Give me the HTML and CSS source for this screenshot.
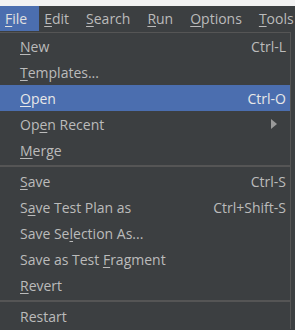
FILE: index.html
```html
<!DOCTYPE html>
<html lang="en">
<head>
    <meta charset="UTF-8">
    <meta name="viewport" content="width=device-width, initial-scale=1.0">
    <title>File Menu</title>
    <link rel="stylesheet" href="styles.css">
</head>
<body>
    <div class="title-strip"></div>

    <div class="menubar">
        <span class="menu-title active"><u>F</u>ile</span>
        <span class="menu-title"><u>E</u>dit</span>
        <span class="menu-title"><u>S</u>earch</span>
        <span class="menu-title"><u>R</u>un</span>
        <span class="menu-title"><u>O</u>ptions</span>
        <span class="menu-title"><u>T</u>ools</span>
    </div>

    <div class="popup">
        <div class="item"><span><u>N</u>ew</span><span class="shortcut">Ctrl-L</span></div>
        <div class="item"><span><u>T</u>emplates...</span></div>
        <div class="item selected"><span><u>O</u>pen</span><span class="shortcut">Ctrl-O</span></div>
        <div class="item"><span>Op<u>e</u>n Recent</span>
            <svg class="arrow" width="6" height="10" viewBox="0 0 6 10"><polygon points="0,0 6,5 0,10" fill="#9a9a9a"/></svg>
        </div>
        <div class="item"><span><u>M</u>erge</span></div>
        <div class="separator"></div>
        <div class="item"><span><u>S</u>ave</span><span class="shortcut">Ctrl-S</span></div>
        <div class="item"><span>S<u>a</u>ve Test Plan as</span><span class="shortcut">Ctrl+Shift-S</span></div>
        <div class="item"><span>Save Se<u>l</u>ection As...</span></div>
        <div class="item"><span>Save as Test <u>F</u>ragment</span></div>
        <div class="item"><span><u>R</u>evert</span></div>
        <div class="separator"></div>
        <div class="item"><span>Restart</span></div>
    </div>
</body>
</html>
```

FILE: styles.css
```css
body {
    margin: 0;
    background-color: #3c3f41;
    font-family: "Open Sans", "Noto Sans", sans-serif;
    font-size: 14px;
    color: #bbbbbb;
    overflow: hidden;
}

u {
    text-decoration-thickness: 1px;
    text-underline-offset: 2px;
}

.title-strip {
    height: 6px;
    background-color: #f2f2f2;
}

.menubar {
    display: flex;
    height: 25px;
    align-items: stretch;
    overflow: hidden;
}

.menu-title {
    display: flex;
    align-items: center;
    padding: 0 9px 0 8px;
    white-space: nowrap;
}

.menu-title.active {
    background-color: #4b6eaf;
    color: #e0e0e0;
    padding: 0 12px 0 5px;
}

.menu-title.active + .menu-title {
    padding-left: 5px;
}

.popup {
    width: 290px;
    margin-top: 1px;
    border-top: 1px solid #555555;
    border-right: 1px solid #555555;
    background-color: #3c3f41;
}

.item {
    display: flex;
    align-items: center;
    justify-content: space-between;
    height: 26px;
    padding: 0 4px 0 20px;
    white-space: nowrap;
}

.item.selected {
    background-color: #4b6eaf;
    color: #e8e8e8;
}

.shortcut {
    color: #bbbbbb;
}

.item.selected .shortcut {
    color: #e8e8e8;
}

.arrow {
    margin-right: 9px;
}

.separator {
    height: 2px;
    margin: 2px 0 1px 0;
    background-color: #555555;
}
```
